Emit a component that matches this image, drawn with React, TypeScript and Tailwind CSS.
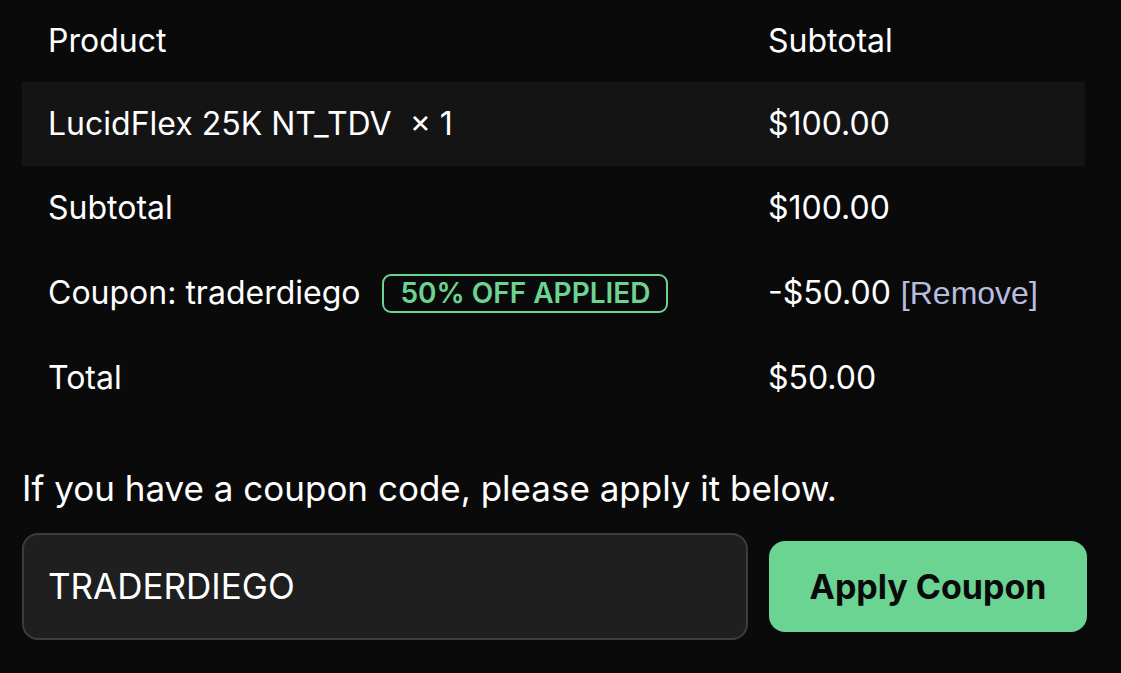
import React from 'react';

const rows = [
  { label: 'Subtotal', value: '$100.00' },
];

export default function App() {
  return (
    <div className="min-h-screen w-full bg-[#0a0a0a] text-white px-[22px]" style={{ fontFamily: 'Inter, "Noto Sans", sans-serif' }}>
      {/* Order table */}
      <div className="w-[1063px] text-[32px]">
        <div className="grid grid-cols-[720px_1fr] h-[82px] items-center">
          <div className="pl-[26px]">Product</div>
          <div className="pl-[26px]">Subtotal</div>
        </div>
        <div className="grid grid-cols-[720px_1fr] h-[84px] items-center bg-[#141414]">
          <div className="pl-[26px]">LucidFlex 25K NT_TDV&nbsp;&nbsp;× 1</div>
          <div className="pl-[26px]">$100.00</div>
        </div>
        {rows.map((r) => (
          <div key={r.label} className="grid grid-cols-[720px_1fr] h-[84px] items-center">
            <div className="pl-[26px]">{r.label}</div>
            <div className="pl-[26px]">{r.value}</div>
          </div>
        ))}
        <div className="grid grid-cols-[720px_1fr] h-[86px] items-center">
          <div className="pl-[26px] flex items-center gap-[22px]">
            <span>Coupon: traderdiego</span>
            <span className="h-[39px] px-[16px] flex items-center rounded-[9px] border-2 border-[#6bd492] text-[#6bd492] text-[28px] font-semibold">
              50% OFF APPLIED
            </span>
          </div>
          <div className="pl-[26px] flex items-center gap-[10px]">
            <span>-$50.00</span>
            <a className="text-[#b8bde0]" style={{ fontFamily: '"Liberation Sans", Arial, sans-serif' }}>[Remove]</a>
          </div>
        </div>
        <div className="grid grid-cols-[720px_1fr] h-[84px] items-center">
          <div className="pl-[26px]">Total</div>
          <div className="pl-[26px]">$50.00</div>
        </div>
      </div>

      {/* Coupon form */}
      <p className="mt-[48px] text-[35px] leading-[40px]">If you have a coupon code, please apply it below.</p>
      <div className="mt-[25px] flex items-center gap-[21px]">
        <div className="w-[726px] h-[107px] rounded-[16px] border-2 border-[#3d3d3d] bg-[#1f1f1f] flex items-center px-[24px] text-[35px]">
          TRADERDIEGO
        </div>
        <button className="w-[318px] h-[91px] rounded-[16px] bg-[#6bd492] text-[#0a0a0a] text-[34px] font-bold">
          Apply Coupon
        </button>
      </div>
    </div>
  );
}
